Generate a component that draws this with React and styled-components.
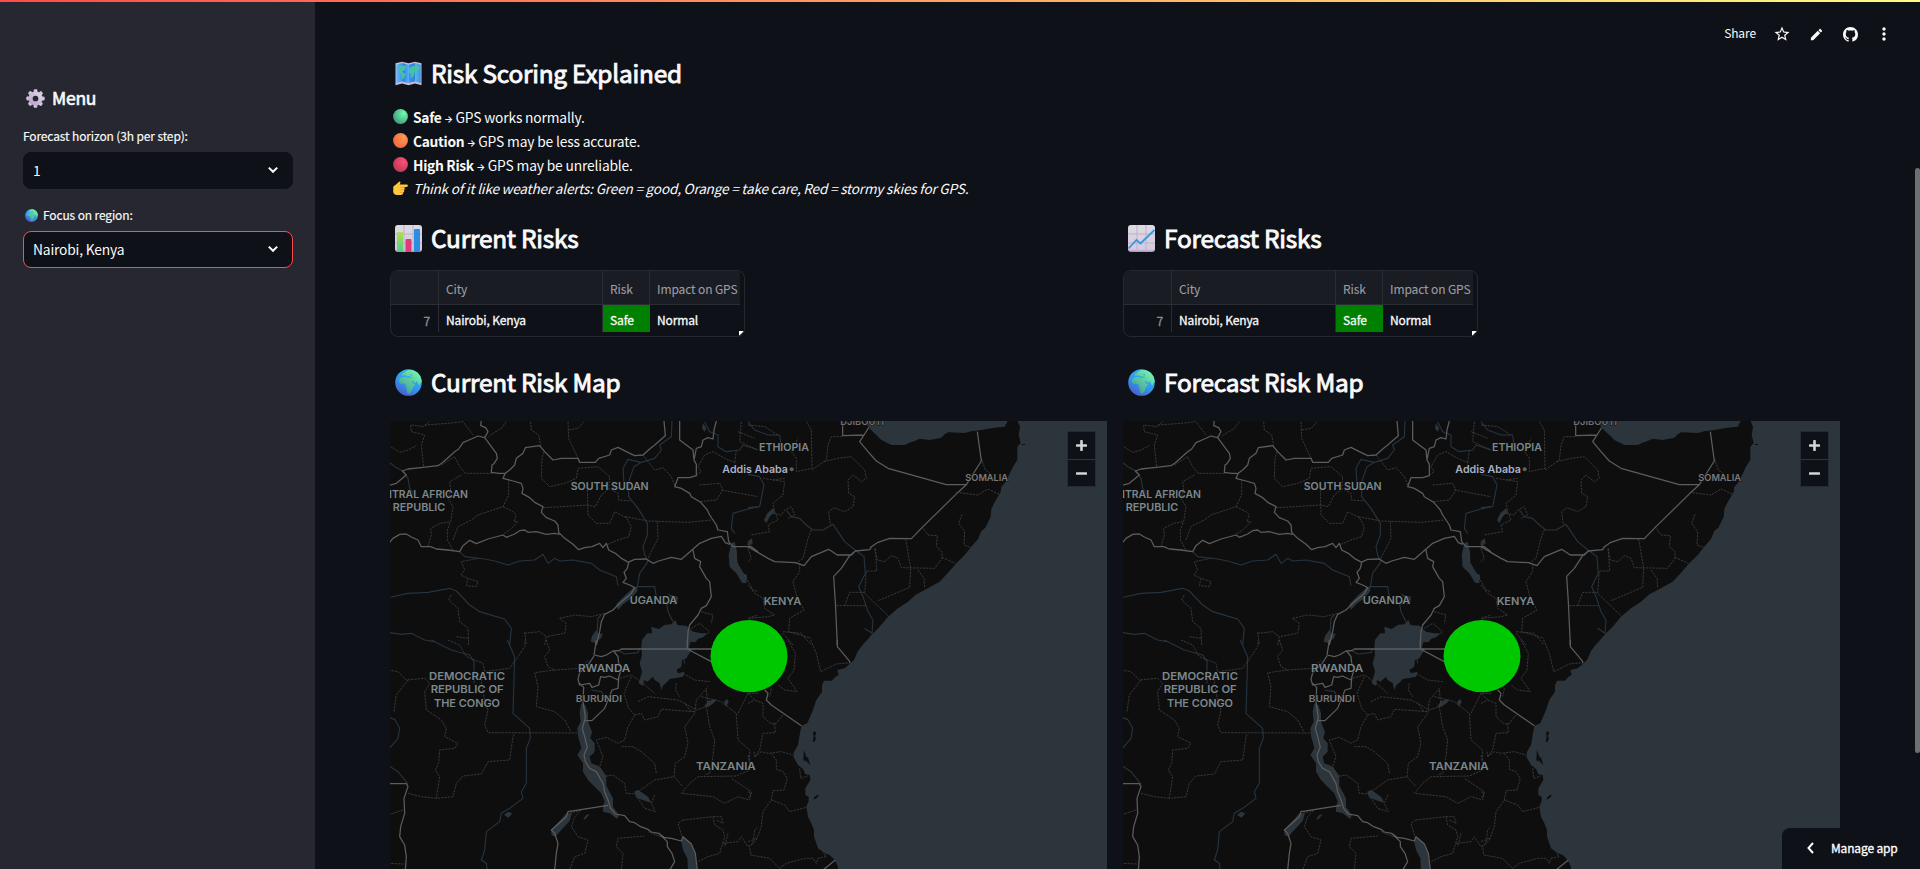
import React from "react";
import styled, { createGlobalStyle } from "styled-components";
import { MdStarBorder, MdEdit, MdMoreVert } from "react-icons/md";

const GlobalStyle = createGlobalStyle`
  *, *::before, *::after { box-sizing: border-box; }
  html, body { margin: 0; background: #0e1117; overflow: hidden; }
  body { font-family: "Noto Sans CJK SC", "Noto Sans", sans-serif; color: #fafafa; }
  h2, h3, p { margin: 0; }
`;

const Page = styled.div`
  position: relative;
  display: flex;
  width: 100%;
  height: 869px;
  overflow: hidden;
  background: #0e1117;
`;

const Decoration = styled.div`
  position: absolute;
  inset: 0 0 auto 0;
  height: 2px;
  z-index: 3;
  background: linear-gradient(90deg, #ff4b4b, #fffd80);
`;

const Sidebar = styled.aside`
  flex: 0 0 315px;
  padding: 83px 22px 0 23px;
  background: #262730;
`;

const MenuTitle = styled.h3`
  display: flex;
  align-items: center;
  gap: 7px;
  height: 30px;
  padding-left: 3px;
  font-size: 17.5px;
  line-height: 30px;
  font-weight: 400;
  letter-spacing: -0.25px;
  -webkit-text-stroke: 0.65px currentColor;
`;

const Label = styled.div`
  display: flex;
  align-items: center;
  gap: 5px;
  height: 20px;
  margin-top: ${(p) => p.$top}px;
  margin-bottom: ${(p) => p.$bottom}px;
  font-size: 12px;
  line-height: 20px;
  letter-spacing: -0.13px;
  white-space: nowrap;
  -webkit-text-stroke: 0.15px currentColor;
  svg { margin-left: 2px; }
`;

const Select = styled.div`
  display: flex;
  align-items: center;
  justify-content: space-between;
  height: 37px;
  padding: 0 13px 1px 9px;
  border: 1px solid ${(p) => (p.$active ? "#ff4b4b" : "#0e1117")};
  border-radius: 8px;
  background: #0e1117;
  font-size: 13.8px;
  letter-spacing: -0.18px;
  line-height: 24px;
`;

const Main = styled.main`
  flex: 1;
  min-width: 0;
  padding: 55px 80px 0 75px;
`;

const Heading = styled.h2`
  display: flex;
  align-items: center;
  gap: 9px;
  height: 36px;
  padding-left: 5px;
  margin-top: ${(p) => p.$top || 0}px;
  font-size: 24.4px;
  line-height: 36px;
  font-weight: 400;
  letter-spacing: -0.22px;
  -webkit-text-stroke: 0.9px currentColor;
  white-space: nowrap;
`;

const Explanation = styled.div`
  margin-top: 13px;
`;

const Line = styled.p`
  display: flex;
  align-items: center;
  gap: 5px;
  height: 24px;
  padding-left: 3px;
  font-size: 13.8px;
  line-height: 24px;
  letter-spacing: -0.16px;
  white-space: pre;
  b { font-weight: 600; letter-spacing: -0.3px; }
  em { font-size: 13.6px; letter-spacing: -0.2px; }
  > span { padding-top: 1px; }
`;

const Arrow = styled.span`
  display: inline-block;
  width: 9px;
  margin: 0 -0.5px;
  font-family: "Inter", "DejaVu Sans", sans-serif;
  font-size: 9.5px;
  font-weight: 600;
  line-height: 12px;
  letter-spacing: 0;
`;

const Columns = styled.div`
  display: grid;
  grid-template-columns: 717px 717px;
  column-gap: 16px;
  margin-top: 20px;
`;

const Column = styled.section`
  min-width: 0;
`;

const TableFrame = styled.div`
  position: relative;
  width: 355px;
  height: 67px;
  margin-top: 14px;
  margin-bottom: 27px;
  border: 1px solid #262830;
  border-radius: 8px;
  overflow: hidden;
  font-size: 12px;
  letter-spacing: -0.12px;
`;

const TableRow = styled.div`
  display: grid;
  grid-template-columns: 48px 164px 47px 90px;
  width: 349px;
  height: ${(p) => (p.$head ? 34 : 27)}px;
  background: ${(p) => (p.$head ? "#1a1c23" : "transparent")};
  color: ${(p) => (p.$head ? "#9c9da1" : "#fafafa")};
  border-bottom: ${(p) => (p.$head ? "1px solid #2b2d35" : "none")};
  -webkit-text-stroke: ${(p) => (p.$head ? "0.1px" : "0.3px")} currentColor;
`;

const Cell = styled.div`
  display: flex;
  align-items: center;
  justify-content: ${(p) => (p.$index ? "flex-end" : "flex-start")};
  padding: ${(p) => (p.$index ? "3px 8px 0 0" : "2px 0 0 7px")};
  border-right: ${(p) => (p.$last || p.$safe ? "none" : "1px solid #2b2d35")};
  background: ${(p) => (p.$safe ? "#008000" : "transparent")};
  color: ${(p) => (p.$index ? "#8b8c91" : "inherit")};
  white-space: nowrap;
`;

const ResizeCorner = styled.i`
  position: absolute;
  right: 0;
  bottom: 0;
  width: 5px;
  height: 5px;
  background: #fff;
  clip-path: polygon(0 0, 100% 0, 0 100%);
`;

const MapFrame = styled.div`
  position: relative;
  width: 717px;
  height: 500px;
  margin-top: 21px;
  background: #0e0e0e;
  overflow: hidden;
  > svg { display: block; }
`;

const ZoomControls = styled.div`
  position: absolute;
  top: 11px;
  right: 12px;
  width: 27px;
  background: #0e1117;
  box-shadow: 0 0 0 1px rgba(14, 17, 23, 0.25);
`;

const ZoomButton = styled.div`
  display: grid;
  place-items: center;
  height: 27px;
  & + & { border-top: 1px solid #31333d; }
`;

const Toolbar = styled.header`
  position: absolute;
  top: 20px;
  right: 19px;
  display: flex;
  align-items: center;
  height: 28px;
  font-size: 12px;
  line-height: 26px;
  z-index: 2;
`;

const ToolIcon = styled.span`
  display: grid;
  place-items: center;
  width: 34px;
  height: 28px;
`;

const ShareLabel = styled.span`
  margin-right: 9px;
  padding-bottom: 2px;
  letter-spacing: -0.1px;
`;

const ScrollThumb = styled.div`
  position: absolute;
  top: 168px;
  right: 0;
  width: 5px;
  height: 585px;
  border-radius: 3px;
  background: #6e6f73;
`;

const ManageApp = styled.button`
  position: absolute;
  right: 0;
  bottom: 0;
  display: flex;
  align-items: center;
  gap: 17px;
  width: 138px;
  height: 41px;
  padding: 0 0 1px 25px;
  border: 0;
  border-radius: 8px 0 0 0;
  background: #0e1117;
  color: #fff;
  font: 400 12px/20px "Noto Sans CJK SC", sans-serif;
  letter-spacing: -0.15px;
  -webkit-text-stroke: 0.3px currentColor;
  white-space: nowrap;
`;

function Chevron() {
  return (
    <svg width="12" height="8" viewBox="0 0 12 8" fill="none">
      <path d="M1.8 1.6 6 5.8l4.2-4.2" stroke="#fafafa" strokeWidth="2" />
    </svg>
  );
}

function GithubMark() {
  return (
    <svg width="15" height="15" viewBox="0 0 16 16" fill="#fafafa">
      <path d="M8 0C3.58 0 0 3.58 0 8c0 3.54 2.29 6.53 5.47 7.59.4.07.55-.17.55-.38 0-.19-.01-.82-.01-1.49-2.01.37-2.53-.49-2.69-.94-.09-.23-.48-.94-.82-1.13-.28-.15-.68-.52-.01-.53.63-.01 1.08.58 1.23.82.72 1.21 1.87.87 2.33.66.07-.52.28-.87.51-1.07-1.78-.2-3.64-.89-3.64-3.95 0-.87.31-1.59.82-2.15-.08-.2-.36-1.02.08-2.12 0 0 .67-.21 2.2.82.64-.18 1.32-.27 2-.27.68 0 1.36.09 2 .27 1.53-1.04 2.2-.82 2.2-.82.44 1.1.16 1.92.08 2.12.51.56.82 1.27.82 2.15 0 3.07-1.87 3.75-3.65 3.95.29.25.54.73.54 1.48 0 1.07-.01 1.93-.01 2.2 0 .21.15.46.55.38A8.013 8.013 0 0 0 16 8c0-4.42-3.58-8-8-8z" />
    </svg>
  );
}

function Gear() {
  const teeth = [0, 45, 90, 135, 180, 225, 270, 315];
  return (
    <svg width="19" height="19" viewBox="0 0 20 20">
      <defs>
        <linearGradient id="gear" x1="1" y1="0" x2="0" y2="1">
          <stop offset="0" stopColor="#e4dcec" />
          <stop offset="1" stopColor="#b09cc6" />
        </linearGradient>
      </defs>
      <g fill="url(#gear)">
        {teeth.map((a) => (
          <rect key={a} x="8" y="0.3" width="4" height="5" rx="1.4" transform={`rotate(${a} 10 10)`} />
        ))}
        <path fillRule="evenodd" d="M10 2.6a7.4 7.4 0 1 0 0 14.8 7.4 7.4 0 0 0 0-14.8Zm0 4.4a3 3 0 1 1 0 6 3 3 0 0 1 0-6Z" />
      </g>
    </svg>
  );
}

function Globe({ size }) {
  return (
    <svg width={size} height={size} viewBox="0 0 27 27">
      <defs>
        <linearGradient id="sea" x1="0.8" y1="0.1" x2="0.3" y2="1">
          <stop offset="0" stopColor="#35b6f8" />
          <stop offset="0.55" stopColor="#3297ee" />
          <stop offset="1" stopColor="#4a5cc8" />
        </linearGradient>
        <linearGradient id="land" x1="1" y1="0" x2="0.2" y2="1">
          <stop offset="0" stopColor="#7dffb0" />
          <stop offset="1" stopColor="#3f9b94" />
        </linearGradient>
      </defs>
      <circle cx="13.5" cy="13.5" r="13.3" fill="url(#sea)" />
      <path fill="url(#land)" d="M9 3.5 13 1l5 .2 4.5 2.3 3 4 1.3 5-1.3 1.5-1.2 2.5-1.3-1.5-1.2-3-2 2.4-1.4-2.3-1.7.5 1.8 2.4 1.6.2-2.4 3.4-.8 3.2-2.5 3-1.8-.2-1-4.6-1-2.6.2-2L8 14.5l-2.7.2-1.6-2.5L5 9.3l2.6-1.4 3.6.1 1 .9 2.7-.5-1-1.4-2.2.4-1.6-1.3-1.8.9-1.8-1.3 1-1.4 1.6.2Z" />
      <path d="M13.7 7.8h2.6l1 .8-2.5.3zM15.5 4.7l2 1.1-.6.9-1.5-.6z" fill="#39a9e8" />
    </svg>
  );
}

function WorldMapIcon() {
  return (
    <svg width="27" height="25" viewBox="0 0 27 25">
      <defs>
        <linearGradient id="fold" x1="0" y1="0" x2="1" y2="0">
          <stop offset="0" stopColor="#66b8ff" />
          <stop offset="0.25" stopColor="#3c95ec" />
          <stop offset="0.27" stopColor="#2f7ad6" />
          <stop offset="0.5" stopColor="#55adff" />
          <stop offset="0.52" stopColor="#3d93eb" />
          <stop offset="0.76" stopColor="#2f84d9" />
          <stop offset="0.78" stopColor="#5ab2ff" />
          <stop offset="1" stopColor="#3a91e2" />
        </linearGradient>
      </defs>
      <path d="M.5 2.2 7 .7l6.5 1.5L20 .7l6.5 1.5v22L20 22.5l-6.5 1.7L7 22.5.5 24.2z" fill="#cbbad8" />
      <path d="M1.3 3.7 7 2l6.5 1.7L20 2l5.7 1.7V22L20 20.5 13.5 22 7 20.5 1.3 22z" fill="url(#fold)" />
      <path d="m2.5 6 3-1.4 4 .2 2.4 1.3-1.6 1.2-.8 2-2.6 1.2.4 1 2.5.8 1 1.5-1.7 2.3-1 2.6-1.3-1.2v-3L5 12.2 4.2 9 2.4 7.7zM14.2 7.3l2.8-1.8 3-.7 4.8 1.3-.4 2.5-1.6.6-.4 2.5-1.7-1.2-1.2 1.1-.8 3.4-2 2.3-1-1.3-.1-2.7-1.8-1.5.2-2.1zM21.5 14.7l2.3.1.2 2-1.6.3z" fill="#45c3a0" />
    </svg>
  );
}

function ChartFrame({ children }) {
  return (
    <svg width="27" height="27" viewBox="0 0 27 27">
      <defs>
        <linearGradient id="paper" x1="0" y1="0" x2="0" y2="1">
          <stop offset="0" stopColor="#dedae2" />
          <stop offset="0.9" stopColor="#d5cbe0" />
          <stop offset="1" stopColor="#a98cc4" />
        </linearGradient>
        <linearGradient id="lime" x1="0" y1="0" x2="0" y2="1">
          <stop offset="0" stopColor="#b5dc4c" />
          <stop offset="1" stopColor="#4bd08d" />
        </linearGradient>
      </defs>
      <rect width="27" height="27" rx="3" fill="url(#paper)" />
      <path d="M9 0v27M18 0v27M0 9h27M0 18h27" stroke="#bdb2c8" strokeWidth="1" />
      {children}
    </svg>
  );
}

function BarChartIcon() {
  return (
    <ChartFrame>
      <rect x="2" y="7" width="6" height="20" rx="1" fill="url(#lime)" />
      <rect x="10.5" y="14" width="6" height="13" rx="1" fill="#e23a78" />
      <rect x="19" y="4" width="6" height="23" rx="1" fill="#2c8ee2" />
    </ChartFrame>
  );
}

function LineChartIcon() {
  return (
    <ChartFrame>
      <path d="M.5 23.5 8.5 15l4 3.5L26.5 5" fill="none" stroke="#3a96dc" strokeWidth="1.8" />
    </ChartFrame>
  );
}

const BALLS = {
  green: ["#6ffcaa", "#3f9a82"],
  orange: ["#ff9a55", "#f2663f"],
  red: ["#ff4f78", "#b93a52"],
};

function Ball({ tone }) {
  const [light, dark] = BALLS[tone];
  return (
    <svg width="15" height="15" viewBox="0 0 15 15">
      <defs>
        <radialGradient id={`ball-${tone}`} cx="0.72" cy="0.3" r="0.8">
          <stop offset="0" stopColor={light} />
          <stop offset="1" stopColor={dark} />
        </radialGradient>
      </defs>
      <circle cx="7.5" cy="7.5" r="7.4" fill={`url(#ball-${tone})`} />
    </svg>
  );
}

function Hand() {
  return (
    <svg width="15" height="15" viewBox="0 0 15 15">
      <path d="M.3 5.6 3 3.6 6 .8q1.4-.6 1.5.7L6.600 3.500h7q1.300.1 1.300 1.200T13.600 6L11 6.300q1 .6.7 1.700-.2.800-.8 1 .6.800.2 1.700-.3.700-1 .8.3.900-.2 1.600-.700.9-2.400.9H4Q.9 13.800.2 11z" fill="#ffc83d" />
      <path d="M7.500 6.400H11M7.300 8.900h3.600M7.200 11.400h2.900" stroke="#ef9340" strokeWidth=".8" />
    </svg>
  );
}

/* Basemap geometry, three drawing units to one pixel. East starts at x = 1080, south at y = 675. */
const BORDERS = {
  nw: [
    "M0 212 25 205 55 180 43 168 60 162 105 157 150 152 163 143 200 110 212 102 225 83 250 72 270 63 290 68 300 50 293 38 278 32 280 15",
    "M290 68 305 88 325 115 328 130 318 146 312 150 310 172 332 175 352 175 345 190 375 198 400 205 405 220 402 235 425 248 440 262 465 275 460 292 475 308 500 318 510 330 512 352 530 370 555 388 572 404 590 398 612 395 635 385 645 398 655 385 662 405 682 415 700 430 722 442 718 460 708 472 715 490 705 502 725 510 740 518 728 538 700 560 675 585 650 598 640 620 635 650 625 690",
    "M352 175 365 165 380 150 385 130 405 115 412 98 455 92 470 110 495 135 520 130 570 130 575 142 622 142 632 130 665 120 670 105 690 97 715 110 740 122 765 120 785 102 800 90 832 62 828 18",
    "M875 18 875 75 895 90 915 105 918 135 925 148 925 182 905 188 870 188 860 215 880 220 905 235 910 245 938 262 958 285 965 300 985 330 990 345 1018 350 1022 380 1035 395 1090 395 1110 410",
    "M918 135 925 100 940 95 945 75 960 68 975 72 978 45 985 18",
    "M0 388 15 370 35 358 55 357 70 366 90 375 100 395 128 395 145 402 180 405 215 410 225 392 245 376 265 386 300 372 345 360 355 367 380 357 395 347 410 345 420 352 445 350 475 358 500 355 515 358",
    "M720 442 740 433 775 432 795 445 812 438 850 427 880 433 912 405 935 385 970 370 1000 364 1012 383 1025 388",
    "M915 405 920 430 938 440 935 455 955 490 965 500 970 545 955 572 940 580 930 600 905 630 900 650 898 690",
  ],
  ne: [
    "M284 20V62L348 60 362 38M348 60 335 80 360 110 385 138 420 160 595 209H655L700 138 688 50",
    "M655 209 632 230 525 335 490 371 425 370 390 382 370 395 365 404 322 408 310 420 268 420 242 403 190 425 168 452 142 443 80 440 60 430 0 395",
    "M322 408 305 422 280 460 257 484 262 560 268 690",
  ],
  sw: [
    "M625 0 618 45 640 50 655 45 675 33 692 32 700 27 1000 27M898 0V27L970 65M600 75 618 48M600 75 575 98 570 118 575 135 605 130 612 142 632 135 638 110 650 112 665 108 690 120 700 85 692 70 690 50 677 33",
    "M692 115 690 145 672 150 660 180 650 205 612 242H590L592 232 585 185 587 142 575 130",
    "M590 240 583 265 590 290 598 322 588 345 592 365 605 385 625 395 645 430 650 455 660 480 668 505 682 522 710 527 725 545 740 548 758 560 780 568 790 576 812 580 828 592 850 595 880 603 885 590 910 612 922 640 928 690",
    "M660 496 540 515 535 530 490 570 500 580 510 610 505 640 500 690",
    "M0 431H55L60 440 48 475 50 520 38 560 35 590 50 615 55 650 52 690M812 580 838 605 838 620 852 640 860 665 845 690",
  ],
  se: [
    "M268 0V20L305 64V70M50 150 60 160 55 180 70 195 160 257M225 690 262 660",
  ],
};

const PROVINCES = {
  nw: [
    "M130 15 108 35 68 30 70 50 110 60 100 90 107 157M110 30 180 25 225 20 255 60M0 90 35 112 60 105 85 92",
    "M355 20 340 40 310 58 300 68M428 20 430 45 452 60 458 92M540 20 542 70 575 140M542 45 570 40 588 20",
    "M160 150 200 125 215 155 232 175 312 175M220 180 185 200 188 225 180 250 195 275 188 320 178 345 178 375 195 405M120 395 130 360 128 340 158 325 188 320M195 375 210 335 250 315 270 300 345 275 362 240 362 195M345 275 375 290 385 300 378 320 390 320 365 345 345 358",
    "M468 110 462 130 460 190 485 215 530 205 565 190 570 160 630 155 665 185 662 220 690 235 692 255 730 258M465 278 520 275 598 270 622 275 640 240 665 220M598 225 600 300 625 325 665 325 680 290 715 308 730 335 722 365 690 375 655 390M712 305 780 318 900 322 970 315M808 320 810 370 780 430",
    "M765 120 800 165 825 158 850 185 860 210M925 180 940 170 930 155 950 120 975 110 1010 130 1045 145M935 210 995 205 1005 225 985 255 935 260M1000 225 1110 245M1060 20 1055 80 1110 105M1045 105 1040 145M1050 50 1100 70",
    "M270 430 220 440 230 465 218 480 240 490 235 512 265 515 270 500 240 490M190 540 182 555 210 580 215 620 240 640 242 690M205 665 240 670M515 610 560 600 610 605 650 595M515 610 535 625 530 655 475 665 470 690M410 650 415 690M410 655 455 650 475 665M1040 405 1045 440 1075 490 1095 525 1110 530M910 640 935 625 965 650 955 660M940 590 975 600 970 625M1080 610 1110 600",
  ],
  ne: [
    "M175 20 190 45 192 160 145 170 145 130 130 110 150 70M0 30 50 35 90 60M192 165 235 135 240 90 250 65 284 65M228 140 270 130 310 125 350 165 355 190 340 200 315 180 300 195 302 235 320 245 315 275 290 290 258 278 242 290 247 330",
    "M45 190 110 200 105 240 75 265 80 290 90 315 60 330 65 350 10 360M75 195 110 190M75 295 100 300 110 285 130 275 140 300 120 310M190 345 180 370 165 430 145 445M155 445 155 470 135 500 145 540 168 585 125 610 122 650 190 670M0 510 20 535 45 550 50 580 80 600 60 605 5 610 5 630",
    "M625 232 690 240 720 222 755 238M700 130 712 165 730 178M642 298 632 325 650 350 648 390 670 398M522 335 540 360 568 362 565 395 582 410 582 430 560 460 460 458 450 430 430 422 410 440 388 435 380 400M582 427 622 445M473 372 488 460 485 517 388 558M510 465 528 490 530 520M382 400 386 468H355L350 535 420 602M265 572H355M290 572 305 532H350M105 655 135 690M105 650 160 655 190 690M0 400 10 430 0 440",
  ],
  sw: [
    "M0 90 30 95 55 120 110 115 125 130 110 155 115 210 160 240 175 265 170 290 210 310 200 325 155 330 152 370 142 390 155 410 145 475 195 470 205 430 225 408 280 402 300 365 365 360 375 290 380 280M60 120 25 165 18 215M60 460 100 470 145 475M0 525 45 510M180 0 215 15 235 50 285 70 290 95 365 85 390 50 410 20 412 0M285 95 280 130 290 180 300 210 290 255 300 278 570 279",
    "M475 0 485 30 470 50 480 80 500 90 580 85 600 60M500 90 440 98 450 140 445 200 500 215 530 240 550 278M695 115 730 105 765 130 800 160M730 110 708 160 722 205 740 225 720 260 710 300 690 310 655 292 625 300 645 350 635 380 645 410 675 405 710 430 715 460 740 462 800 420 858 410 862 370 890 350 900 310 890 260 920 220 925 180 960 140",
    "M740 225 760 220 770 240 810 230 820 208 920 215M750 185 780 170 870 180 890 190 910 215M865 130 862 150 875 170M700 320 735 320 760 335 800 370 805 400M885 100 920 120 965 125M890 190 925 210 955 200 965 260 980 300 975 350 965 400 950 405M940 170 1000 185 1045 220 1050 300 1085 330 1085 390 1045 408 930 410 905 430 880 460 975 470 1010 490 1050 470 1085 480 1090 455 1030 415M955 150 960 200M1050 220 1080 160 1110 160",
    "M858 410 885 440M800 465 790 490 802 515 770 505 750 475M545 520 580 510 560 530 550 560 570 590 600 600 590 640 560 650 545 690M700 690 705 640 685 620 690 595 770 588M885 540 975 530 980 555 1005 570 1010 590 995 640 960 650 930 665M885 540 870 550 885 600M975 530 1000 530 1005 550 985 540M1005 610 1050 605 1060 590 1080 620 1095 610 1100 570 1110 560M1020 580 1010 620M830 595 780 575M0 670 50 672",
  ],
  se: [
    "M120 0 142 40 138 90 120 115 148 155 110 150 90 135M188 0 205 40 218 95 265 72 305 68M70 145 65 170M0 160 20 180 45 190 45 230 70 252 85 250 105 225M80 250 82 278 45 280 35 330 20 350 18 335M20 350 40 335 60 340 100 335 135 345M70 340 85 360 85 388 105 395 118 415 108 450 75 452 70 480 45 515 40 560 25 600 5 620 8 645 65 655 95 685 115 670 170 655 195 655 205 670 210 655 235 650 225 638M70 480 110 495 125 515 175 502M155 385 158 415 180 408M0 455 10 460 0 475M0 190 20 180M0 605 25 595M0 345 5 370",
  ],
};

const RIVERS = {
  nw: [
    "M0 138 20 155 45 168 60 190 65 220 80 240",
    "M852 18 850 65 815 90 820 105 800 130 760 142 720 133 705 160 708 205 M760 142 738 155 722 200 722 245 750 280 778 325 778 360 765 395 770 420 780 440 755 475 748 515 800 515 805 545",
    "M215 410 230 425 290 432 320 438 360 450 395 438 440 435 465 418 480 445 500 430 515 438 555 435 610 445 635 465 685 485 690 512",
    "M0 548 60 535 120 532 185 520 205 528 245 570 275 590 325 605 350 612 370 640 365 690M0 652 40 658 70 655 110 675 140 680",
    "M950 20 965 50 990 60 990 95 1015 110 1055 105 1065 90 1110 105M1110 275 1070 285 1035 295 1030 340 1040 355M835 560 840 590 855 620M625 690 630 610 640 600",
  ],
  ne: [
    "M0 20 20 45 60 60 95 60 100 95M0 178 35 185 48 210 40 250 35 275 0 278M115 285 130 305 155 310 175 330 195 345 225 345 255 328 290 380 325 408 348 425 352 475 332 515 345 545 360 590 375 615 372 655 350 640",
  ],
  sw: [
    "M130 0 190 30 245 45 258 65 258 130M358 0 380 50 375 220 425 265 427 295 415 325 415 430 400 455 405 475 365 505 340 520 335 545 295 575 290 630 280 660 295 670 298 690",
    "M0 232 20 238 35 265 30 295 0 330M0 375 30 395 60 432M690 30 710 42 750 38 755 25M610 150 640 155 650 170 640 185M880 5 890 70",
  ],
};

const ORIGIN = { nw: [0, 0], ne: [1080, 0], sw: [0, 675], se: [1080, 675] };

const GULF =
  "M340 0 362 38 385 60 400 75 430 90 470 90 485 83 500 78 515 71 545 75 580 68 590 58 600 52 650 54 670 49 700 45 740 38 770 35 778 20 785 0Z";
const OCEAN =
  "M810 0 810 22 816 35 812 60 818 85 808 95 808 135 795 155 783 180 770 205 760 215 758 230 740 262 730 282 728 305 712 338 700 348 690 372 670 395 650 420 625 445 600 473 575 500 545 517 530 525 505 538 480 560 450 580 420 605 395 635 370 660 345 690 355 675 330 708 318 735 305 747 290 760 268 765 272 780 262 785 252 797 228 797 222 810 222 830 205 855 195 885 178 925 160 932 155 960 150 990 138 1010 136 1025 150 1050 165 1062 172 1078 185 1080 187 1095 172 1120 172 1140 182 1145 182 1158 175 1175 180 1205 190 1225 198 1245 198 1265 210 1300 230 1315 245 1320 260 1335 265 1345 270 1355 270 1520H1100V0Z";
const LAKES = [
  "M760 695 762 675 778 655 792 655 790 635 812 642 830 630 850 628 862 615 868 630 895 632 915 650 940 655 957 655 948 665 930 672 922 682 908 680 902 700 912 702 895 730 882 735 880 755 865 765 870 775 890 770 885 785 845 792 838 800 825 812 820 825 815 805 800 795 795 785 778 800 768 795 765 813 752 805 762 770 755 745 762 720Z",
  "M685 568 712 540 735 520 748 512 748 528 730 550 705 568 690 585Z",
  "M1030 385 1040 380 1047 410 1048 445 1065 475 1077 480 1075 505 1062 503 1045 475 1025 455 1022 420Z",
  "M608 680 612 663 625 645 632 658 644 655 640 668 622 684Z",
  "M580 865 592 870 600 895 600 920 612 950 607 970 620 985 620 1010 605 1025 610 1045 632 1053 640 1062 655 1082 655 1112 675 1150 675 1175 693 1200 688 1212 665 1195 645 1190 645 1175 650 1160 640 1135 620 1115 600 1095 585 1070 585 1045 568 1020 580 1000 570 962 568 940 578 920 575 890Z",
  "M490 1245 520 1212 535 1195 552 1195 545 1218 515 1250 502 1265 490 1260Z",
  "M738 1130 750 1125 765 1135 780 1145 790 1163 778 1160 745 1148Z",
  "M885 1265 905 1280 920 1310 928 1370H900L898 1330 885 1305 880 1280Z",
  "M1128 315 1138 295 1155 280 1160 290 1145 305 1135 325Z",
  "M1078 390 1080 378 1092 370 1094 385 1084 394Z",
  "M945 25 955 40 950 50 942 40Z",
  "M948 875 960 858 985 852 980 862 962 875ZM1008 860 1018 852 1022 860 1014 876ZM585 1213 595 1200 605 1198 592 1213ZM348 1200 360 1190 373 1195 362 1208ZM838 535 848 540 870 545 868 562 858 570 855 555Z",
];
const ISLANDS =
  "M195 950H204V958L200 962 204 970 200 980H194L197 965ZM168 1005 175 1025 180 1028 187 1050 178 1042 174 1035 172 1040 166 1035ZM195 1153 202 1144 212 1138 210 1145 202 1152ZM822 87H831V90H822Z";

const PLACES = [
  ["CENTRAL AFRICAN", -54, 248, 294, 31, "#7c888c"],
  ["REPUBLIC", 14, 288, 158, 31, "#7c888c"],
  ["SOUTH SUDAN", 548, 226, 234, 31, "#7c888c"],
  ["UGANDA", 725, 566, 143, 31, "#7c888c"],
  ["ETHIOPIA", 1113, 109, 150, 31, "#7c888c"],
  ["Addis Ababa", 1003, 173, 197, 31, "#a9b3c8"],
  ["DJIBOUTI", 1357, 30, 131, 27, "#707070"],
  ["SOMALIA", 1732, 199, 128, 28, "#7a7a7a"],
  ["KENYA", 1127, 570, 113, 31, "#7c888c"],
  ["RWANDA", 570, 772, 157, 31, "#7c888c"],
  ["BURUNDI", 563, 862, 139, 28, "#7a7a7a"],
  ["DEMOCRATIC", 123, 795, 228, 31, "#7c888c"],
  ["REPUBLIC OF", 128, 835, 219, 31, "#7c888c"],
  ["THE CONGO", 138, 876, 198, 31, "#7c888c"],
  ["TANZANIA", 924, 1066, 179, 31, "#7c888c"],
];

const PlaceName = styled.text`
  font-family: "Inter", "Liberation Sans", sans-serif;
  font-weight: 600;
  paint-order: stroke;
  stroke: #0e0e0e;
  stroke-width: 3px;
`;

function LineSet({ sets, ...stroke }) {
  return (
    <g fill="none" strokeLinejoin="round" {...stroke}>
      {Object.entries(sets).map(([part, lines]) => (
        <path key={part} d={lines.join("")} transform={`translate(${ORIGIN[part]})`} />
      ))}
    </g>
  );
}

function RiskMap() {
  return (
    <MapFrame>
      <svg width="717" height="500" viewBox="6 18 2151 1500">
        <LineSet sets={RIVERS} stroke="#263440" strokeWidth="3.4" />
        <g fill="#2c353c">
          {LAKES.map((d) => <path key={d} d={d} />)}
          <path d={GULF + OCEAN} transform="translate(1080 0)" />
        </g>
        <path d={ISLANDS} transform="translate(1080 0)" fill="#0e0e0e" />
        <LineSet sets={PROVINCES} stroke="#3b3b3b" strokeWidth="2.8" strokeDasharray="7 3" />
        <LineSet sets={BORDERS} stroke="#5c5c5c" strokeWidth="3.8" />
        <circle cx="1211" cy="163" r="6" fill="#5c6068" />
        {PLACES.map(([name, x, y, width, size, fill]) => (
          <PlaceName key={name} x={x} y={y} fontSize={size} fill={fill} textLength={width} lengthAdjust="spacingAndGlyphs">
            {name}
          </PlaceName>
        ))}
        <ellipse cx="1083" cy="723.5" rx="115.5" ry="108.5" fill="#00c800" />
      </svg>
      <ZoomControls>
        <ZoomButton>
          <svg width="11" height="11" viewBox="0 0 11 11"><path d="M5.500 1v9M1 5.500h9" stroke="#d4d4d4" strokeWidth="2.600" strokeLinecap="round" /></svg>
        </ZoomButton>
        <ZoomButton>
          <svg width="11" height="11" viewBox="0 0 11 11"><path d="M1 5.500h9" stroke="#d4d4d4" strokeWidth="2.600" strokeLinecap="round" /></svg>
        </ZoomButton>
      </ZoomControls>
    </MapFrame>
  );
}

function RiskTable() {
  return (
    <TableFrame>
      <TableRow $head>
        <Cell $index />
        <Cell>City</Cell>
        <Cell>Risk</Cell>
        <Cell $last>Impact on GPS</Cell>
      </TableRow>
      <TableRow>
        <Cell $index>7</Cell>
        <Cell>Nairobi, Kenya</Cell>
        <Cell $safe>Safe</Cell>
        <Cell $last>Normal</Cell>
      </TableRow>
      <ResizeCorner />
    </TableFrame>
  );
}

function RiskColumn({ title, icon }) {
  return (
    <Column>
      <Heading>{icon}<span>{title} Risks</span></Heading>
      <RiskTable />
      <Heading><Globe size={27} /><span>{title} Risk Map</span></Heading>
      <RiskMap />
    </Column>
  );
}

export default function App() {
  return (
    <Page>
      <GlobalStyle />
      <Decoration />
      <Sidebar>
        <MenuTitle><Gear /><span>Menu</span></MenuTitle>
        <Label $top={13} $bottom={6}>Forecast horizon (3h per step):</Label>
        <Select><span>1</span><Chevron /></Select>
        <Label $top={16} $bottom={6}><Globe size={13} /><span>Focus on region:</span></Label>
        <Select $active><span>Nairobi, Kenya</span><Chevron /></Select>
      </Sidebar>
      <Main>
        <Heading><WorldMapIcon /><span>Risk Scoring Explained</span></Heading>
        <Explanation>
          <Line><Ball tone="green" /><span><b>Safe</b> <Arrow>→</Arrow> GPS works normally.</span></Line>
          <Line><Ball tone="orange" /><span><b>Caution</b> <Arrow>→</Arrow> GPS may be less accurate.</span></Line>
          <Line><Ball tone="red" /><span><b>High Risk</b> <Arrow>→</Arrow> GPS may be unreliable.</span></Line>
          <Line><Hand /><em>Think of it like weather alerts: Green = good, Orange = take care, Red = stormy skies for GPS.</em></Line>
        </Explanation>
        <Columns>
          <RiskColumn title="Current" icon={<BarChartIcon />} />
          <RiskColumn title="Forecast" icon={<LineChartIcon />} />
        </Columns>
      </Main>
      <Toolbar>
        <ShareLabel>Share</ShareLabel>
        <ToolIcon><MdStarBorder size={18} /></ToolIcon>
        <ToolIcon><MdEdit size={15} /></ToolIcon>
        <ToolIcon><GithubMark /></ToolIcon>
        <ToolIcon><MdMoreVert size={20} /></ToolIcon>
      </Toolbar>
      <ScrollThumb />
      <ManageApp>
        <svg width="7" height="12" viewBox="0 0 7 12" fill="none"><path d="M6 1 1.500 6 6 11" stroke="#fff" strokeWidth="2" /></svg>
        <span>Manage app</span>
      </ManageApp>
    </Page>
  );
}
